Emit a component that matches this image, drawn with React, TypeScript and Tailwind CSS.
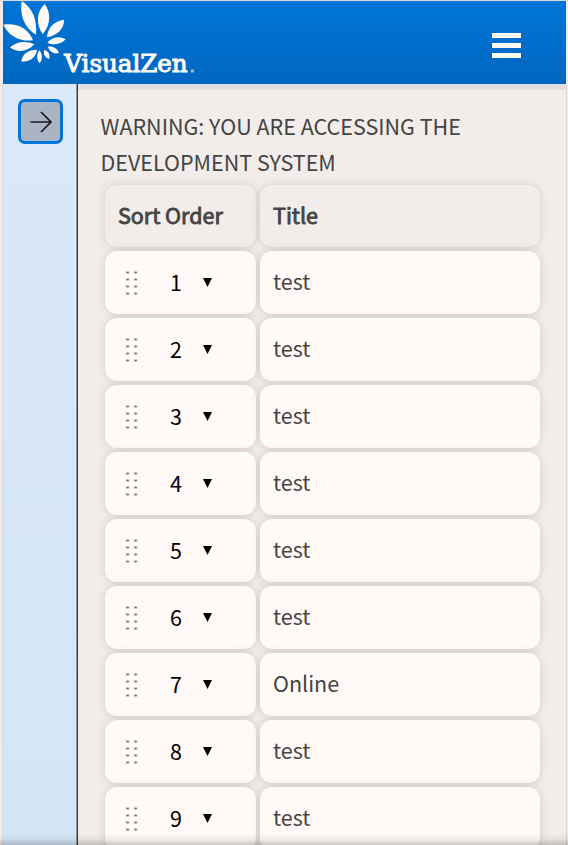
import React from "react";

const rows = ["test", "test", "test", "test", "test", "test", "Online", "test", "test"];

const petals = [
  "M65 3C95 22 112 55 108 104C80 88 58 55 65 3Z",
  "M134 12C153 37 153 72 128 103C108 72 108 37 134 12Z",
  "M192 59C193 86 172 106 141 112C143 82 163 63 192 59Z",
  "M197 118C182 134 162 136 142 128C158 110 178 107 197 118Z",
  "M10 74C50 68 84 84 99 121C60 126 26 108 10 74Z",
  "M30 142C52 123 78 122 103 133C82 156 52 160 30 142Z",
  "M64 185C66 162 84 149 111 149C108 172 90 185 64 185Z",
  "M119 190C109 177 109 164 118 151C128 164 128 177 119 190Z",
  "M147 177C133 171 129 161 133 149C146 154 151 164 147 177Z",
  "M177 159C160 162 148 155 144 140C160 138 171 145 177 159Z",
];

function Logo() {
  return (
    <svg className="h-[81px] w-[207px] shrink-0" viewBox="9 3 621 243" fill="#fffaf7">
      {petals.map((d) => (
        <path key={d} d={d} />
      ))}
      <text x="193" y="216" fontFamily="'DejaVu Serif', serif" fontWeight="400" fontSize="70" stroke="#fffaf7" strokeWidth="3" textLength="370" lengthAdjust="spacingAndGlyphs">
        VisualZen
      </text>
      <circle cx="577" cy="213" r="5.5" fill="#8fbbe3" />
    </svg>
  );
}

function Grip() {
  return (
    <svg className="mt-px h-[26px] w-[14px]" viewBox="0 0 14 26">
      {[2.5, 9.5, 16.5, 23.5].map((y) =>
        [3, 11].map((x) => (
          <g key={x + "-" + y}>
            <ellipse cx={x - 0.5} cy={y} rx="2.2" ry="1.8" fill="#cfc8c3" />
            <rect x={x - 1} y={y - 0.5} width="1.5" height="1" fill="#57514d" />
          </g>
        ))
      )}
    </svg>
  );
}

const card = "rounded-xl shadow-[0_0_9px_rgba(60,40,60,0.17)] flex items-center";

export default function App() {
  return (
    <div className="relative flex h-[845px] w-[568px] flex-col overflow-hidden border-t border-[#dedad8] bg-[#f2edea] font-['Noto_Sans_CJK_SC',sans-serif] text-[21.5px] text-[#444]">
      <header className="ml-[3px] mr-[2px] flex h-[83px] shrink-0 items-start justify-between bg-linear-to-b from-[#0075d8] to-[#0067c0]">
        <Logo />
        <div className="mr-[45px] mt-[32px] flex flex-col gap-[5px]">
          <div className="h-[5px] w-[29px] bg-[#fffaf7]" />
          <div className="h-[5px] w-[29px] bg-[#fffaf7]" />
          <div className="h-[5px] w-[29px] bg-[#fffaf7]" />
        </div>
      </header>
      <div className="mr-[1px] flex min-h-0 flex-1">
        <aside className="ml-[2px] flex w-[76px] shrink-0 border-x border-l-[#d9d8dc] border-r-[#36373c] bg-linear-to-b from-[#dae8f8] to-[#d4e6f6]">
          <div className="flex-1 border-r border-[#8c98a8] pl-[15px] pt-[15px]">
            <button className="flex h-[45px] w-[45px] items-center justify-center rounded-[7px] border-3 border-[#0075d8] bg-[#a9b5c4]">
              <svg className="h-[22px] w-[22px]" viewBox="0 0 22 22" fill="none" stroke="#1b1a20" strokeWidth="1.7">
                <path d="M.5 11H21M11 1L21 11L11 21" />
              </svg>
            </button>
          </div>
        </aside>
        <main className="min-w-0 flex-1 border-r border-[#d9d6d6]">
          <div className="h-[6px] bg-[#e4dfde]" />
          <div className="pl-[22.5px] pt-[18px]">
            <p className="h-[77px] whitespace-nowrap leading-[36px]">
              WARNING: YOU ARE ACCESSING THE
              <br />
              DEVELOPMENT SYSTEM
            </p>
            <div className="ml-[4.5px] grid grid-cols-[151px_280px] gap-1">
              <div className={card + " h-[62px] bg-[#f2edea] pb-0.5 pl-[13px] [-webkit-text-stroke:0.85px_#444]"}>Sort Order</div>
              <div className={card + " h-[62px] bg-[#f2edea] pb-0.5 pl-[13px] [-webkit-text-stroke:0.85px_#444]"}>Title</div>
              {rows.map((title, i) => (
                <React.Fragment key={i}>
                  <div className={card + " h-[63px] bg-[#fffaf7] pl-[20px] text-black"}>
                    <Grip />
                    <span className="ml-[31px] w-[12px] text-center">{i + 1}</span>
                    <svg className="ml-[21px] h-[9px] w-[9px]" viewBox="0 0 9 9">
                      <path d="M0 0H9L4.5 9Z" />
                    </svg>
                  </div>
                  <div className={card + " h-[63px] bg-[#fffaf7] pb-[3px] pl-[13px]"}>{title}</div>
                </React.Fragment>
              ))}
            </div>
          </div>
        </main>
      </div>
      <div className="absolute inset-x-0 bottom-0 h-[12px] bg-linear-to-b from-transparent via-black/5 to-black/20" />
    </div>
  );
}
